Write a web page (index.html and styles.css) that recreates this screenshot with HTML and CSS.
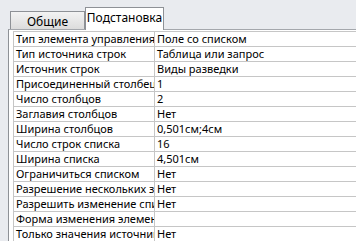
FILE: index.html
```html
<!DOCTYPE html>
<html lang="ru">
<head>
    <meta charset="UTF-8">
    <title>Окно свойств</title>
    <link rel="stylesheet" href="styles.css">
</head>
<body>
    <div class="sheet">
        <div class="tabs">
            <div class="tab">Общие</div>
            <div class="tab active">Подстановка</div>
        </div>
        <div class="panel">
            <table class="props">
                <tr><td class="name">Тип элемента управления</td><td>Поле со списком</td></tr>
                <tr><td class="name">Тип источника строк</td><td>Таблица или запрос</td></tr>
                <tr><td class="name">Источник строк</td><td>Виды разведки</td></tr>
                <tr><td class="name">Присоединенный столбец</td><td>1</td></tr>
                <tr><td class="name">Число столбцов</td><td>2</td></tr>
                <tr><td class="name">Заглавия столбцов</td><td>Нет</td></tr>
                <tr><td class="name">Ширина столбцов</td><td>0,501см;4см</td></tr>
                <tr><td class="name">Число строк списка</td><td>16</td></tr>
                <tr><td class="name">Ширина списка</td><td>4,501см</td></tr>
                <tr><td class="name">Ограничиться списком</td><td>Нет</td></tr>
                <tr><td class="name">Разрешение нескольких значений</td><td>Нет</td></tr>
                <tr><td class="name">Разрешить изменение списка значений</td><td>Нет</td></tr>
                <tr><td class="name">Форма изменения элементов списка</td><td></td></tr>
                <tr><td class="name">Только значения источника строк</td><td>Нет</td></tr>
            </table>
        </div>
    </div>
</body>
</html>
```

FILE: styles.css
```css
body {
    margin: 0;
    background-color: #e9ebef;
    font-family: "Noto Sans", "Open Sans", sans-serif;
    font-size: 11px;
    color: #000;
    overflow: hidden;
}

.sheet {
    width: 356px;
    height: 241px;
    overflow: hidden;
}

.tabs {
    display: flex;
    align-items: flex-end;
    height: 29px;
    padding-left: 10px;
}

.tab {
    height: 17px;
    width: 73px;
    border: 1px solid #8e9196;
    border-bottom: none;
    background: linear-gradient(#f3f3f3, #dcdcdc);
    text-align: center;
    line-height: 19px;
    font-size: 12px;
}

.tab.active {
    height: 22px;
    width: 77px;
    background: #fff;
    line-height: 20px;
    margin-bottom: -1px;
}

.panel {
    margin-left: 8px;
    border-top: 1px solid #a4a7ac;
    border-left: 1px solid #8e9196;
    background: #fff;
    padding: 1px 0 0 4px;
    height: 220px;
}

.props {
    border-collapse: collapse;
    width: 344px;
    table-layout: fixed;
}

.props td {
    height: 14px;
    padding: 0 0 0 2px;
    border: 1px solid #c6c6c6;
    white-space: nowrap;
    overflow: hidden;
    line-height: 14px;
}

.props td.name {
    width: 138px;
}
```
